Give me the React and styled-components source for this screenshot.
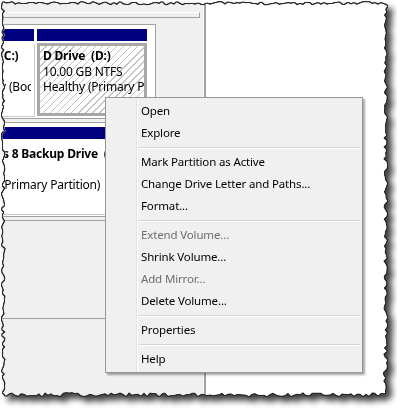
import styled, { createGlobalStyle } from "styled-components";

const GlobalStyle = createGlobalStyle`
  html, body {
    margin: 0;
    padding: 0;
    background: #fff;
  }
  body {
    font-family: "Segoe UI", "Noto Sans", sans-serif;
    font-size: 11.5px;
    letter-spacing: -0.15px;
    color: #000;
  }
`;

// torn paper outline, seeded so it is the same on every load
function makeTornEdge() {
  let seed = 11;
  const rand = () => {
    seed = (seed * 16807) % 2147483647;
    return (seed - 1) / 2147483646;
  };
  const pts = [];
  for (let x = 3; x <= 385; x += 3) pts.push([x, 4 + (rand() - 0.5) * 3]);
  for (let y = 6; y <= 393; y += 3) pts.push([385 + (rand() - 0.5) * 4, y]);
  for (let x = 384; x >= 3; x -= 3) pts.push([x, 394 + (rand() - 0.5) * 4]);
  for (let y = 392; y >= 6; y -= 3) pts.push([4 + (rand() - 0.5) * 4, y]);
  return `polygon(${pts
    .map(([x, y]) => `${x.toFixed(1)}px ${y.toFixed(1)}px`)
    .join(", ")})`;
}

const TORN = makeTornEdge();

const MENU = [
  { label: "Open" },
  { label: "Explore" },
  "sep",
  { label: "Mark Partition as Active" },
  { label: "Change Drive Letter and Paths..." },
  { label: "Format..." },
  "sep",
  { label: "Extend Volume...", disabled: true },
  { label: "Shrink Volume..." },
  { label: "Add Mirror...", disabled: true },
  { label: "Delete Volume..." },
  "sep",
  { label: "Properties" },
  "sep",
  { label: "Help" },
];

function Partition({ name, size, status, width, shift = 0, selected }) {
  return (
    <PartBox $width={width} $shift={shift}>
      <PartHeader />
      <PartBody $selected={selected}>
        <PartName>{name}</PartName>
        <PartLine>{size}</PartLine>
        <PartLine>{status}</PartLine>
      </PartBody>
    </PartBox>
  );
}

export default function App() {
  return (
    <>
      <GlobalStyle />
      <Frame>
        <Paper>
          <LeftPane>
            <PrevRowEdge />
            <DiskRow>
              <Partition
                name="Local  (C:)"
                size=""
                status="Healthy (Boot, Page File, Crash Dump, Primary Partition)"
                width={34}
                shift={42}
              />
              <Partition
                name="D Drive  (D:)"
                size="10.00 GB NTFS"
                status="Healthy (Primary Partition)"
                width={110}
                selected
              />
            </DiskRow>
            <DiskRow $wide>
              <Partition
                name="Windows 8 Backup Drive  (G:)"
                size=""
                status="Healthy (Primary Partition)"
                width={150}
                shift={50}
              />
            </DiskRow>
            <EmptyRow />
          </LeftPane>
          <RightPane />

          <ContextMenu>
            {MENU.map((item, i) =>
              item === "sep" ? (
                <Separator key={i} />
              ) : (
                <MenuItem key={i} $disabled={item.disabled}>
                  {item.label}
                </MenuItem>
              )
            )}
          </ContextMenu>
        </Paper>
      </Frame>
    </>
  );
}

const Frame = styled.div`
  width: 397px;
  height: 409px;
  filter: drop-shadow(1px 0 0 #2a2a2a) drop-shadow(-1px 0 0 #2a2a2a)
    drop-shadow(0 1px 0 #2a2a2a) drop-shadow(0 -1px 0 #2a2a2a)
    drop-shadow(5px 5px 3px rgba(0, 0, 0, 0.75));
`;

const Paper = styled.div`
  position: relative;
  width: 397px;
  height: 409px;
  display: flex;
  background: #fff;
  clip-path: ${TORN};
`;

const LeftPane = styled.div`
  width: 204px;
  flex: none;
  background: #f0f0f0;
  border-right: 2px solid #a0a0a0;
  box-shadow: inset -1px 0 0 #fff;
  overflow: hidden;
  display: flex;
  flex-direction: column;
`;

const RightPane = styled.div`
  flex: 1;
  background: #fff;
`;

const PrevRowEdge = styled.div`
  width: 199px;
  height: 4px;
  margin-top: 12px;
  border-top: 1px solid #fff;
  border-right: 1px solid #a0a0a0;
  border-bottom: 1px solid #a0a0a0;
  flex: none;
`;

const DiskRow = styled.div`
  width: ${(p) => (p.$wide ? 260 : 151)}px;
  margin-top: ${(p) => (p.$wide ? 3 : 6)}px;
  display: flex;
  gap: 3px;
  padding: 4px 4px 2px 0;
  background: #fff;
  border: 1px solid #a0a0a0;
  border-left: none;
  flex: none;
`;

const EmptyRow = styled.div`
  height: 97px;
  margin-top: 3px;
  border-top: 1px solid #a0a0a0;
  border-bottom: 1px solid #a0a0a0;
  flex: none;
`;

const PartBox = styled.div`
  width: ${(p) => p.$width + p.$shift}px;
  margin-left: ${(p) => -p.$shift}px;
  flex: none;
  display: flex;
  flex-direction: column;
`;

const PartHeader = styled.div`
  height: 12px;
  background: #000080;
`;

const PartBody = styled.div`
  height: 65px;
  margin-top: 2px;
  padding: 2px 3px 0;
  border: 3px solid ${(p) => (p.$selected ? "#a8a8a8" : "#fff")};
  box-shadow: ${(p) => (p.$selected ? "none" : "1px 1px 0 #c8c8c8")};
  background: ${(p) =>
    p.$selected
      ? "repeating-linear-gradient(135deg, #fff 0 4px, #c4c4c4 4px 5px)"
      : "#fff"};
  overflow: hidden;
  white-space: pre;
  line-height: 15.5px;
  font-size: 12px;
  letter-spacing: -0.2px;
`;

const PartName = styled.div`
  font-weight: bold;
`;

const PartLine = styled.div`
  min-height: 15.5px;
`;

const ContextMenu = styled.div`
  position: absolute;
  left: 105px;
  top: 97px;
  width: 252px;
  padding: 2px;
  background-color: #f0f0f0;
  background-image: linear-gradient(
    to right,
    transparent 30px,
    #e2e2e2 30px 31px,
    #fff 31px 32px,
    transparent 32px
  );
  border: 1px solid #979797;
  box-shadow: 2px 2px 2px rgba(0, 0, 0, 0.35);
`;

const MenuItem = styled.div`
  height: 22px;
  line-height: 22px;
  padding-left: 33px;
  color: ${(p) => (p.$disabled ? "#6d6d6d" : "#000")};
  white-space: nowrap;
`;

const Separator = styled.div`
  height: 0;
  margin: 3px 0 2px 30px;
  border-top: 1px solid #d7d7d7;
  border-bottom: 1px solid #fff;
`;
